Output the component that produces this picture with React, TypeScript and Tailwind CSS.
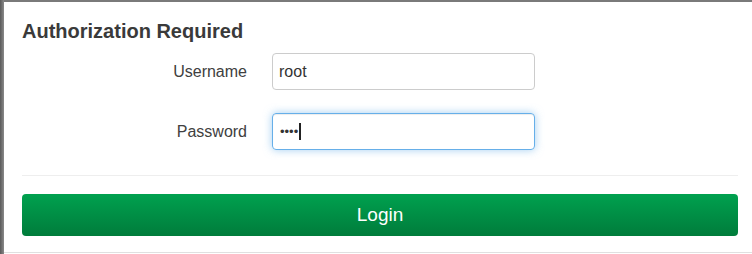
import React from "react";

export default function App() {
  return (
    <div
      className="w-[752px] h-[254px] overflow-hidden bg-[#e6e6e6] flex"
      style={{ fontFamily: '"Liberation Sans", Arial, sans-serif' }}
    >
      <div className="w-[4px] bg-gradient-to-r from-[#5a5a5a] to-[#8a8a8a]" />
      <div className="flex-1 flex flex-col">
        <div className="h-[2px] bg-[#7a7a7a]" />
        <div className="flex-1 bg-white h-[250px] flex flex-col pl-[18px] pr-[14px]">
          <h2 className="mt-[18px] text-[20px] leading-[22px] font-bold text-[#3a3a3a]">
            Authorization Required
          </h2>
          <div className="mt-[11px] flex items-center">
            <div className="w-[225px] text-right text-[16px] text-[#404040]">Username</div>
            <div className="ml-[25px] w-[263px] h-[37px] border border-[#cccccc] rounded-[4px] flex items-center pl-[6px] text-[16px] text-[#333]">
              root
            </div>
          </div>
          <div className="mt-[23px] flex items-center">
            <div className="w-[225px] text-right text-[16px] text-[#404040]">Password</div>
            <div className="ml-[25px] w-[263px] h-[37px] border border-[#66afe9] rounded-[4px] flex items-center pl-[7px] shadow-[0_0_8px_rgba(102,175,233,0.6),inset_0_1px_1px_rgba(0,0,0,0.075)]">
              <span className="text-[13px] text-[#333]">••••</span>
              <span className="ml-[1px] w-[2px] h-[17px] bg-[#222]" />
            </div>
          </div>
          <div className="mt-[25px] h-px bg-[#eeeeee]" />
          <button className="mt-[18px] h-[42px] w-full rounded-[4px] bg-gradient-to-b from-[#00a14f] to-[#007c3b] text-white text-[19px] flex items-center justify-center">
            Login
          </button>
          <div className="flex-1" />
        </div>
        <div className="h-px bg-[#e0e0e0]" />
        <div className="h-px bg-white" />
      </div>
    </div>
  );
}
